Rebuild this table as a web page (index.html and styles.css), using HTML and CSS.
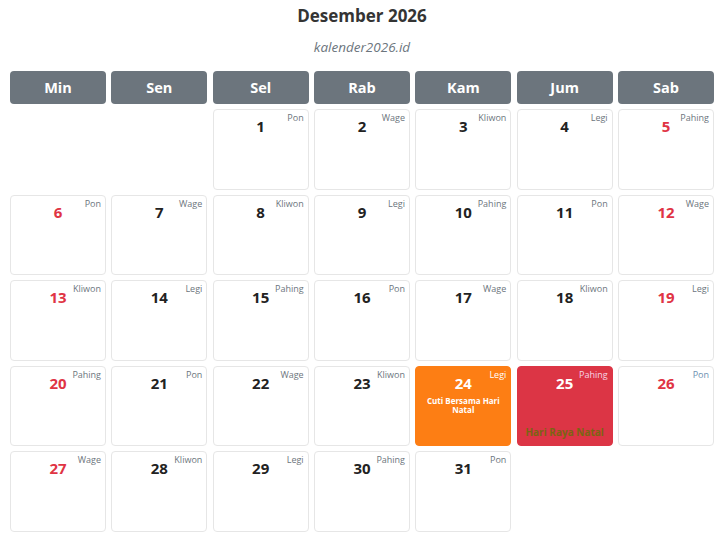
FILE: index.html
```html
<!DOCTYPE html>
<html lang="id">
<head>
<meta charset="utf-8">
<title>Desember 2026</title>
<link rel="stylesheet" href="styles.css">
</head>
<body>
<div class="page">
  <h1 class="title">Desember 2026</h1>
  <div class="subtitle">kalender2026.id</div>
  <div class="cal">
    <div class="head">Min</div>
    <div class="head">Sen</div>
    <div class="head">Sel</div>
    <div class="head">Rab</div>
    <div class="head">Kam</div>
    <div class="head">Jum</div>
    <div class="head">Sab</div>

    <div class="empty"></div>
    <div class="empty"></div>
    <div class="day"><span class="num">1</span><span class="pas">Pon</span></div>
    <div class="day"><span class="num">2</span><span class="pas">Wage</span></div>
    <div class="day"><span class="num">3</span><span class="pas">Kliwon</span></div>
    <div class="day"><span class="num">4</span><span class="pas">Legi</span></div>
    <div class="day red"><span class="num">5</span><span class="pas">Pahing</span></div>

    <div class="day red"><span class="num">6</span><span class="pas">Pon</span></div>
    <div class="day"><span class="num">7</span><span class="pas">Wage</span></div>
    <div class="day"><span class="num">8</span><span class="pas">Kliwon</span></div>
    <div class="day"><span class="num">9</span><span class="pas">Legi</span></div>
    <div class="day"><span class="num">10</span><span class="pas">Pahing</span></div>
    <div class="day"><span class="num">11</span><span class="pas">Pon</span></div>
    <div class="day red"><span class="num">12</span><span class="pas">Wage</span></div>

    <div class="day red"><span class="num">13</span><span class="pas">Kliwon</span></div>
    <div class="day"><span class="num">14</span><span class="pas">Legi</span></div>
    <div class="day"><span class="num">15</span><span class="pas">Pahing</span></div>
    <div class="day"><span class="num">16</span><span class="pas">Pon</span></div>
    <div class="day"><span class="num">17</span><span class="pas">Wage</span></div>
    <div class="day"><span class="num">18</span><span class="pas">Kliwon</span></div>
    <div class="day red"><span class="num">19</span><span class="pas">Legi</span></div>

    <div class="day red"><span class="num">20</span><span class="pas">Pahing</span></div>
    <div class="day"><span class="num">21</span><span class="pas">Pon</span></div>
    <div class="day"><span class="num">22</span><span class="pas">Wage</span></div>
    <div class="day"><span class="num">23</span><span class="pas">Kliwon</span></div>
    <div class="day cuti"><span class="num">24</span><span class="pas">Legi</span><span class="note">Cuti Bersama Hari Natal</span></div>
    <div class="day libur"><span class="num">25</span><span class="pas">Pahing</span><span class="note">Hari Raya Natal</span></div>
    <div class="day red blue-pas"><span class="num">26</span><span class="pas">Pon</span></div>

    <div class="day red"><span class="num">27</span><span class="pas">Wage</span></div>
    <div class="day"><span class="num">28</span><span class="pas">Kliwon</span></div>
    <div class="day"><span class="num">29</span><span class="pas">Legi</span></div>
    <div class="day"><span class="num">30</span><span class="pas">Pahing</span></div>
    <div class="day"><span class="num">31</span><span class="pas">Pon</span></div>
    <div class="empty"></div>
    <div class="empty"></div>
  </div>
</div>
</body>
</html>
```
FILE: styles.css
```css
* { box-sizing: border-box; }
html, body { margin: 0; padding: 0; background: #fff; }
body {
  font-family: "Open Sans", "Noto Sans", "DejaVu Sans", sans-serif;
  color: #333;
}
.page {
  padding: 5px 13px 0 10px;
}
.title {
  margin: 0;
  text-align: center;
  font-size: 17px;
  font-weight: 700;
  line-height: 22px;
  color: #343434;
}
.subtitle {
  margin-top: 11px;
  text-align: center;
  font-size: 13.5px;
  font-style: italic;
  line-height: 18px;
  color: #6c757d;
}
.cal {
  margin-top: 15px;
  display: grid;
  grid-template-columns: repeat(7, 1fr);
  grid-template-rows: 33px;
  grid-auto-rows: 80.5px;
  column-gap: 5.33px;
  row-gap: 5px;
}
.head {
  background: #6c757d;
  color: #fff;
  border-radius: 4px;
  font-weight: 700;
  font-size: 14.5px;
  display: flex;
  align-items: center;
  justify-content: center;
}
.day {
  position: relative;
  border: 1px solid #e6e6e6;
  border-radius: 4px;
  display: flex;
  flex-direction: column;
  align-items: center;
  padding-top: 6px;
}
.num {
  font-size: 15px;
  font-weight: 700;
  line-height: 20px;
  color: #222;
}
.pas {
  position: absolute;
  top: 2px;
  right: 4px;
  font-size: 9px;
  line-height: 12px;
  color: #6c757d;
}
.red .num { color: #e03444; }
.blue-pas .pas { color: #6d8fb0; }
.cuti {
  background: #fd7e14;
  border-color: #fd7e14;
}
.cuti .num, .cuti .pas { color: #fff; }
.cuti .note {
  margin-top: 3px;
  color: #fff;
  font-size: 8px;
  font-weight: 700;
  line-height: 9.5px;
  text-align: center;
  padding: 0 6px;
}
.libur {
  background: #dc3545;
  border-color: #dc3545;
}
.libur .num { color: #fff; }
.libur .pas { color: #f6d5e6; }
.libur .note {
  margin-top: auto;
  margin-bottom: 6px;
  color: #7a6412;
  font-size: 10px;
  font-weight: 700;
  line-height: 13px;
}
```
